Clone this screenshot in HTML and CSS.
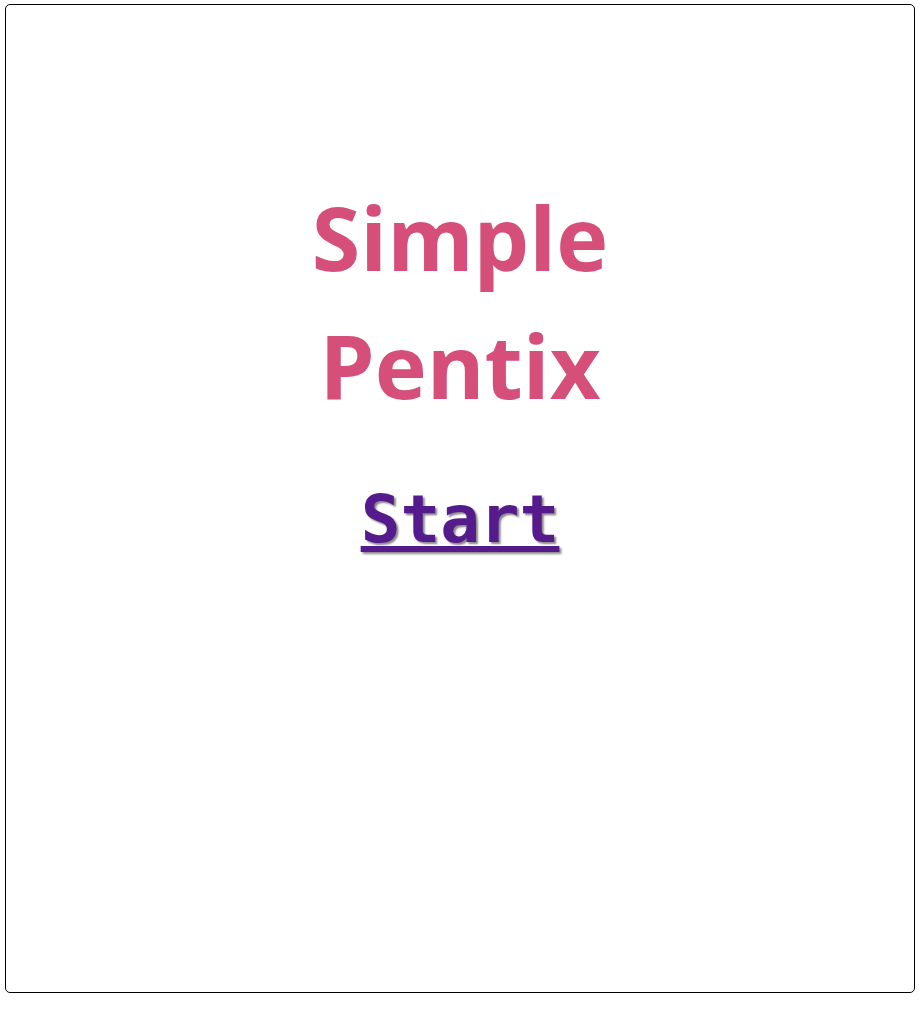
FILE: index.html
```html
<!DOCTYPE html>
<html>
<head>
<meta charset="utf-8">
<link rel="stylesheet" href="styles.css">
</head>
<body>
<div class="frame">
  <h1 class="title">Simple<br>Pentix</h1>
  <a class="start" href="#">Start</a>
</div>
</body>
</html>
```
FILE: styles.css
```css
html, body {
  margin: 0;
  padding: 0;
  background: #fff;
}
.frame {
  box-sizing: border-box;
  margin: 4px 0 0 5px;
  width: 910px;
  height: 989px;
  border: 1px solid #000;
  border-radius: 5px;
  display: flex;
  flex-direction: column;
  align-items: center;
  padding-top: 168px;
}
.title {
  margin: 0;
  font-family: "Comic Sans MS", "Open Sans", sans-serif;
  font-weight: bold;
  font-size: 88px;
  line-height: 128px;
  color: #d64f7b;
  text-align: center;
}
.start {
  margin-top: 52px;
  font-family: "DejaVu Sans Mono", monospace;
  font-weight: bold;
  font-size: 66px;
  color: #551a8b;
  text-shadow: 2px 2px 2px #888;
  text-decoration: underline;
}
```
